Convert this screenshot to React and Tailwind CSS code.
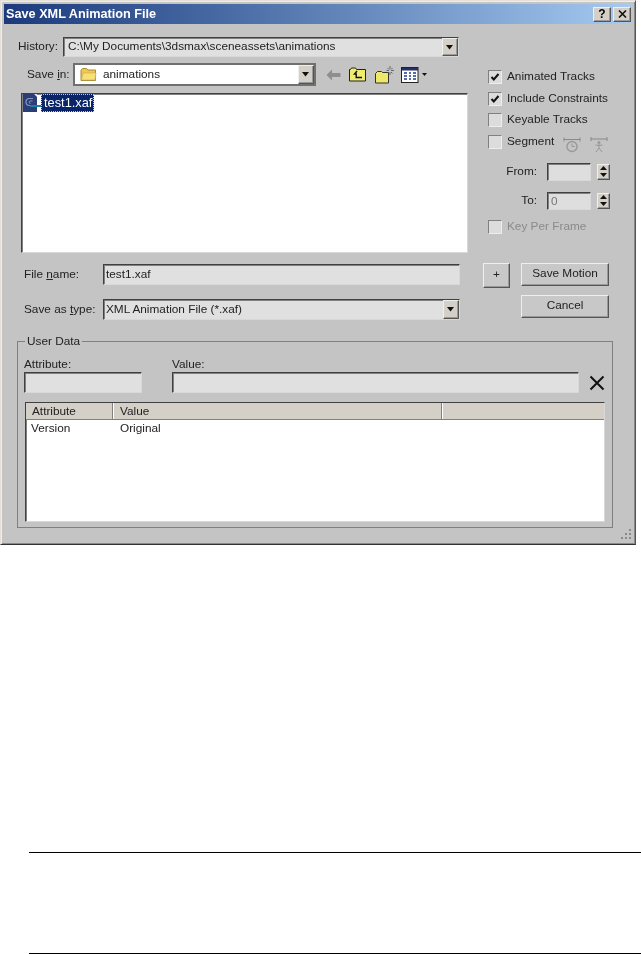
const sunken = 'border border-t-[#404040] border-l-[#404040] border-r-[#d8d8d8] border-b-[#d8d8d8] shadow-[inset_1px_1px_0_#808080]'
const raised = 'border border-t-[#efefef] border-l-[#efefef] border-r-[#555555] border-b-[#555555] shadow-[inset_-1px_-1px_0_#999999]'

function TitleButton({ children }) {
  return (
    <div className={`w-[18px] h-[15px] bg-[#d4d0c8] flex items-center justify-center text-[12px] font-bold text-black ${raised}`}>
      {children}
    </div>
  )
}

function DropArrow() {
  return (
    <div className={`w-[16px] self-stretch flex items-center justify-center bg-[#d4d0c8] ${raised}`}>
      <svg width="8" height="5" viewBox="0 0 8 5"><path d="M0 0h7L3.5 4.5z" fill="#111" /></svg>
    </div>
  )
}

function Check({ checked, label, muted }) {
  return (
    <div className="flex items-center h-[14px]">
      <div className="w-[14px] h-[14px] flex items-center justify-center bg-[#dcdcdc] border border-t-[#808080] border-l-[#808080] border-r-[#eeeeee] border-b-[#eeeeee]">
        {checked && (
          <svg width="10" height="10" viewBox="0 0 10 10"><path d="M1.5 5l2.3 2.5L8.5 2" fill="none" stroke="#111" strokeWidth="2" /></svg>
        )}
      </div>
      <span className={`ml-[5px] ${muted ? 'text-[#8a8a8a]' : ''}`}>{label}</span>
    </div>
  )
}

function Spinner() {
  return (
    <div className={`w-[13px] h-[16px] ml-[6px] bg-[#d4d0c8] flex flex-col items-center justify-center gap-[3px] ${raised}`}>
      <svg width="7" height="4" viewBox="0 0 7 4"><path d="M3.5 0L7 4H0z" fill="#111" /></svg>
      <svg width="7" height="4" viewBox="0 0 7 4"><path d="M0 0h7L3.5 4z" fill="#111" /></svg>
    </div>
  )
}

function SpinRow({ label, value }) {
  return (
    <div className="flex items-center h-[18px]">
      <span className="w-[59px] text-right pr-[10px]">{label}</span>
      <div className={`w-[44px] h-[18px] bg-[#dedede] pl-[3px] leading-[16px] text-[#777777] ${sunken}`}>{value}</div>
      <Spinner />
    </div>
  )
}

function Button({ children, className }) {
  return (
    <div className={`h-[23px] bg-[#c8c8c8] flex items-center justify-center ${raised} ${className}`}>
      {children}
    </div>
  )
}

function Toolbar() {
  return (
    <div className="flex items-center ml-[10px] h-[23px]">
      {/* back */}
      <svg width="15" height="12" viewBox="0 0 15 12">
        <path d="M6 0.5V4h8.5v4H6v3.5L0.5 6z" fill="#8e8e8e" />
      </svg>
      {/* up folder */}
      <svg className="ml-[8px]" width="17" height="15" viewBox="0 0 17 15">
        <path d="M0.5 14V2.5h1l1-1.5h4l1 1.5h9V14z" fill="#f0ec70" stroke="#222" />
        <path d="M8 4L5.5 7h1.7v3.5H13" fill="none" stroke="#111" strokeWidth="1.4" />
      </svg>
      {/* new folder */}
      <svg className="ml-[9px]" width="19" height="18" viewBox="0 0 19 18">
        <path d="M0.5 17V7.5l2-2h4l1 1h6V17z" fill="#eee868" stroke="#333" />
        <path d="M15 0v3M15 6v3M11.5 4.5h2.5M16 4.5h3M12.5 2l1.5 1.5M17.5 2L16 3.5M17.5 7.5L16 6" stroke="#666" fill="none" />
      </svg>
      {/* views */}
      <svg className="ml-[7px]" width="18" height="16" viewBox="0 0 18 16">
        <rect x="0.5" y="0.5" width="16.5" height="15" fill="#fff" stroke="#222" />
        <rect x="1" y="1" width="16" height="2.5" fill="#24306a" />
        <path d="M3 6h3M8 6h2M12 6h3M3 9h3M8 9h2M12 9h3M3 12h3M8 12h2M12 12h3" stroke="#223a90" strokeWidth="1.6" />
      </svg>
      <svg className="ml-[3px]" width="5" height="3" viewBox="0 0 5 3"><path d="M0 0h5L2.5 3z" fill="#111" /></svg>
    </div>
  )
}

function FolderIcon() {
  return (
    <svg width="17" height="15" viewBox="0 0 17 15">
      <path d="M1 13.5V3l1.5-1.5h4L8 3h7.5v10.5z" fill="#eec850" stroke="#a68a3a" />
      <path d="M1.5 13l1.5-7h13l-1 7z" fill="#f8e078" stroke="#c9a84a" strokeWidth="0.6" />
    </svg>
  )
}

function FileIcon() {
  return (
    <svg width="19" height="18" viewBox="0 0 19 18">
      <rect width="14" height="18" fill="#2a3d78" />
      <path d="M10 4.5H6.5a3.5 3.5 0 0 0 0 7H8" fill="none" stroke="#8b98bd" strokeWidth="1.2" />
      <path d="M9.5 7H7.5a1 1 0 0 0 0 2.5" fill="none" stroke="#8b98bd" />
      <rect x="7" y="11" width="12" height="2" fill="#1f7f95" />
      <path d="M11 0h3v3z" fill="#dfe5ef" />
    </svg>
  )
}

function ClockIcon() {
  return (
    <svg width="18" height="17" viewBox="0 0 18 17">
      <path d="M1 3.5h16M1 1.5v4M17 1.5v4" stroke="#888" fill="none" />
      <circle cx="9" cy="10.5" r="5" fill="none" stroke="#999" strokeWidth="1.4" />
      <path d="M9 7.5v3h3" stroke="#999" fill="none" />
    </svg>
  )
}

function FigureIcon() {
  return (
    <svg width="18" height="17" viewBox="0 0 18 17">
      <path d="M1 3h16M1 1v4M17 1v4" stroke="#888" fill="none" />
      <circle cx="9" cy="6.5" r="1.5" fill="#999" />
      <path d="M9 8v4M5.5 9L9 9.5 12.5 9M6 16l3-4 3 4" stroke="#999" fill="none" />
    </svg>
  )
}

function FileForm() {
  return (
    <div className="w-[475px] shrink-0">
      <div className="flex items-stretch mt-[13px] h-[20px] pl-[14px]">
        <span className="w-[45px] leading-[18px]">History:</span>
        <div className={`w-[396px] flex items-center bg-[#e0e0e0] pl-[4px] ${sunken}`}>
          <span className="flex-1">C:\My Documents\3dsmax\sceneassets\animations</span>
          <DropArrow />
        </div>
      </div>

      <div className="flex items-stretch mt-[6px] h-[23px] pl-[23px]">
        <span className="w-[46px] leading-[23px]">Save <u>i</u>n:</span>
        <div className="w-[243px] flex items-center bg-white pl-[5px] border-2 border-[#707070]">
          <FolderIcon />
          <span className="flex-1 ml-[6px]">animations</span>
          <DropArrow />
        </div>
        <Toolbar />
      </div>

      <div className={`mt-[7px] ml-[17px] w-[447px] h-[160px] bg-white pl-[1px] ${sunken}`}>
        <div className="flex items-center h-[18px]">
          <FileIcon />
          <span className="bg-[#0a246a] text-white h-[18px] leading-[17px] text-[12.8px] pl-[3px] pr-[2px] -ml-[1px] outline-1 outline-dotted outline-[#d8c880] -outline-offset-1">test1.xaf</span>
        </div>
      </div>

      <div className="flex items-center mt-[11px] h-[21px] pl-[20px]">
        <span className="w-[79px]">File <u>n</u>ame:</span>
        <div className={`w-[357px] h-[21px] bg-[#e0e0e0] pl-[2px] leading-[19px] ${sunken}`}>test1.xaf</div>
      </div>

      <div className="flex items-center mt-[14px] h-[21px] pl-[20px]">
        <span className="w-[79px]">Save as <u>t</u>ype:</span>
        <div className={`w-[357px] h-[21px] flex items-center bg-[#e0e0e0] pl-[2px] ${sunken}`}>
          <span className="flex-1">XML Animation File (*.xaf)</span>
          <DropArrow />
        </div>
      </div>
    </div>
  )
}

function Options() {
  return (
    <div className="ml-[9px] w-[140px]">
      <div className="flex flex-col gap-[7.5px] mt-[46px]">
        <Check checked label="Animated Tracks" />
        <Check checked label="Include Constraints" />
        <Check label="Keyable Tracks" />
        <div className="flex items-center h-[14px]">
          <Check label="Segment" />
          <div className="flex ml-[9px] mt-[6px] gap-[9px]">
            <ClockIcon />
            <FigureIcon />
          </div>
        </div>
      </div>
      <div className="flex flex-col gap-[11px] mt-[14px]">
        <SpinRow label="From:" />
        <SpinRow label="To:" value="0" />
      </div>
      <div className="mt-[10px]">
        <Check muted label="Key Per Frame" />
      </div>
      <div className="flex items-start mt-[29px] -ml-[5px]">
        <Button className="w-[27px] h-[25px]">+</Button>
        <div className="ml-[11px] flex flex-col gap-[9px]">
          <Button className="w-[88px]">Save Motion</Button>
          <Button className="w-[88px]">Cancel</Button>
        </div>
      </div>
    </div>
  )
}

function UserData() {
  return (
    <div className="relative mt-[21px] ml-[13px] w-[596px] h-[187px] border border-[#808080] px-[6px]">
      <span className="absolute left-[7px] -top-[8px] bg-[#c4c4c4] px-[2px] leading-[14px]">User Data</span>
      <div className="flex mt-[14px] h-[16px] leading-[16px]">
        <span className="w-[148px]">Attribute:</span>
        <span>Value:</span>
      </div>
      <div className="flex items-center">
        <div className={`w-[118px] h-[21px] bg-[#e0e0e0] ${sunken}`} />
        <div className={`ml-[30px] w-[407px] h-[21px] bg-[#e0e0e0] ${sunken}`} />
        <svg className="ml-[10px]" width="16" height="16" viewBox="0 0 16 16">
          <path d="M1.5 1.5l13 13M14.5 1.5l-13 13" stroke="#111" strokeWidth="2" />
        </svg>
      </div>
      <div className={`mt-[9px] ml-[1px] w-[580px] h-[120px] bg-white ${sunken}`}>
        <div className="flex h-[17px] bg-[#d4d0c8] leading-[16px] border-b border-[#808080]">
          <span className="w-[87px] pl-[6px] border-r border-r-[#808080] shadow-[1px_0_0_#fff]">Attribute</span>
          <span className="w-[329px] pl-[7px] border-r border-r-[#808080] shadow-[1px_0_0_#fff]">Value</span>
        </div>
        <div className="flex h-[17px] leading-[17px]">
          <span className="w-[87px] pl-[5px]">Version</span>
          <span className="pl-[7px]">Original</span>
        </div>
      </div>
    </div>
  )
}

export default function App() {
  return (
    <div className="w-[641px] h-[954px] bg-white relative font-['Liberation_Sans',Arial,sans-serif] text-[11.8px] text-[#222222] overflow-hidden">
      <div className="relative w-[636px] h-[545px] bg-[#c4c4c4] border border-t-[#e4e0d8] border-l-[#e4e0d8] border-r-[#555555] border-b-[#333333] shadow-[inset_1px_1px_0_#eeeeee,inset_-1px_-1px_0_#8a8a8a] p-[3px] blur-[0.35px]">
        <div className="h-[20px] flex items-center justify-between pl-[2px] pr-[1px] bg-gradient-to-r from-[#1c3a7c] to-[#a6caf0]">
          <span className="text-white font-bold text-[12.7px] mt-[1px]">Save XML Animation File</span>
          <div className="flex gap-[2px]">
            <TitleButton>?</TitleButton>
            <TitleButton>
              <svg width="9" height="8" viewBox="0 0 9 8"><path d="M1 0.5l7 7M8 0.5l-7 7" stroke="#111" strokeWidth="1.6" /></svg>
            </TitleButton>
          </div>
        </div>
        <div className="flex">
          <FileForm />
          <Options />
        </div>
        <UserData />
        {/* resize grip */}
        <svg className="absolute right-[3px] bottom-[3px]" width="12" height="12" viewBox="0 0 12 12" fill="#8a8a8a">
          <rect x="9" y="0" width="2" height="2" />
          <rect x="5" y="4" width="2" height="2" />
          <rect x="9" y="4" width="2" height="2" />
          <rect x="1" y="8" width="2" height="2" />
          <rect x="5" y="8" width="2" height="2" />
          <rect x="9" y="8" width="2" height="2" />
        </svg>
      </div>
      {/* page rules under the dialog */}
      <div className="mt-[307px] ml-[29px] h-[102px] border-t border-b border-black" />
    </div>
  )
}
